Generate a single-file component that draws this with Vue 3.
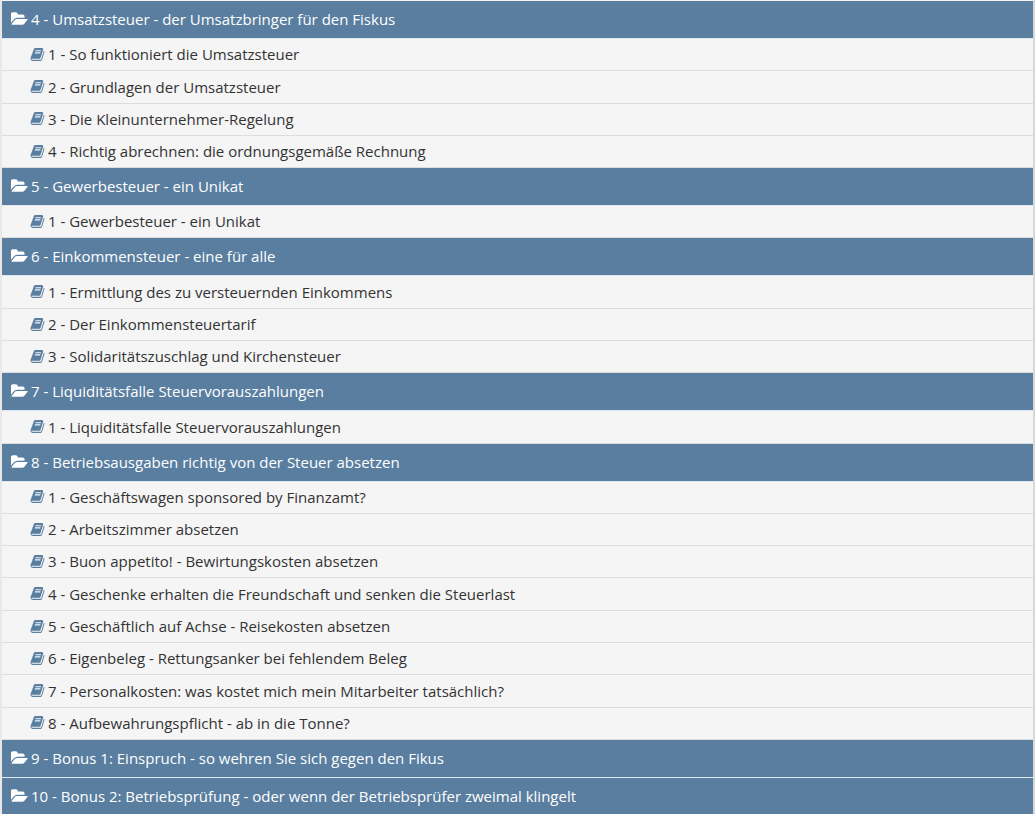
<script setup>
const chapters = [
  { title: "4 - Umsatzsteuer - der Umsatzbringer für den Fiskus", lessons: ["1 - So funktioniert die Umsatzsteuer", "2 - Grundlagen der Umsatzsteuer", "3 - Die Kleinunternehmer-Regelung", "4 - Richtig abrechnen: die ordnungsgemäße Rechnung"] },
  { title: "5 - Gewerbesteuer - ein Unikat", lessons: ["1 - Gewerbesteuer - ein Unikat"] },
  { title: "6 - Einkommensteuer - eine für alle", lessons: ["1 - Ermittlung des zu versteuernden Einkommens", "2 - Der Einkommensteuertarif", "3 - Solidaritätszuschlag und Kirchensteuer"] },
  { title: "7 - Liquiditätsfalle Steuervorauszahlungen", lessons: ["1 - Liquiditätsfalle Steuervorauszahlungen"] },
  { title: "8 - Betriebsausgaben richtig von der Steuer absetzen", lessons: ["1 - Geschäftswagen sponsored by Finanzamt?", "2 - Arbeitszimmer absetzen", "3 - Buon appetito! - Bewirtungskosten absetzen", "4 - Geschenke erhalten die Freundschaft und senken die Steuerlast", "5 - Geschäftlich auf Achse - Reisekosten absetzen", "6 - Eigenbeleg - Rettungsanker bei fehlendem Beleg", "7 - Personalkosten: was kostet mich mein Mitarbeiter tatsächlich?", "8 - Aufbewahrungspflicht - ab in die Tonne?"] },
  { title: "9 - Bonus 1: Einspruch - so wehren Sie sich gegen den Fikus", lessons: [] },
  { title: "10 - Bonus 2: Betriebsprüfung - oder wenn der Betriebsprüfer zweimal klingelt", lessons: [] },
];

const folderPath = "M1815 952q0 31-31 66l-336 396q-43 51-120.5 86.5t-143.5 35.5h-1088q-34 0-60.5-13t-26.5-43q0-31 31-66l336-396q43-51 120.5-86.5t143.5-35.5h1088q34 0 60.5 13t26.5 43zm-343-344v160h-832q-94 0-197 47.5t-164 119.5l-337 396-5 6q0-4-.5-12.5t-.5-12.5v-960q0-92 66-158t158-66h320q92 0 158 66t66 158v32h544q92 0 158 66t66 158z";
const bookPath = "M1703 478q40 57 18 129l-275 906q-19 64-76.5 107.5t-122.5 43.5h-923q-77 0-148.5-53.5t-99.5-131.5q-24-67-2-127 0-4 3-27t4-37q1-8-3-21.5t-3-19.5q2-11 8-21t16.5-23.5 16.5-23.5q23-38 45-91.5t30-91.5q3-10 .5-30t-.5-28q3-11 17-28t17-23q21-36 42-92t25-90q1-9-2.5-32t.5-28q4-13 22-30.5t22-22.5q19-26 42.5-84.5t27.5-96.5q1-8-3-25.5t-2-26.5q2-8 9-18t18-23 17-21q8-12 16.5-30.5t15-35 16-36 19.5-32 26.5-23.5 36-11.5 47.5 5.5l-1 3q38-9 51-9h761q74 0 114 56t18 130l-274 906q-36 119-71.5 153.5t-128.5 34.5h-869q-27 0-38 15-11 16-1 43 24 70 144 70h923q29 0 56-15.5t35-41.5l300-987q7-22 5-57 38 15 59 43zm-1064 2q-4 13 2 22.5t20 9.5h608q13 0 25.5-9.5t16.5-22.5l21-64q4-13-2-22.5t-20-9.5h-608q-13 0-25.5 9.5t-16.5 22.5zm-83 256q-4 13 2 22.5t20 9.5h608q13 0 25.5-9.5t16.5-22.5l21-64q4-13-2-22.5t-20-9.5h-608q-13 0-25.5 9.5t-16.5 22.5z";
</script>

<template>
  <div class="page">
    <div class="chapter" v-for="chapter in chapters" :key="chapter.title">
      <div class="chapter-head">
        <svg class="folder" viewBox="0 0 1920 1792"><path :d="folderPath" /></svg>
        <span>{{ chapter.title }}</span>
      </div>
      <div class="lesson" v-for="lesson in chapter.lessons" :key="lesson">
        <svg class="book" viewBox="0 0 1792 1792"><path :d="bookPath" /></svg>
        <span>{{ lesson }}</span>
      </div>
    </div>
  </div>
</template>

<style>
html,
body {
  margin: 0;
  background: #ffffff;
  overflow: hidden;
}
</style>

<style scoped>
.page {
  height: 814px;
  overflow: hidden;
  padding: 1px 2px 0;
  background: linear-gradient(90deg, #e8e8e8 0, #e8e8e8 2px, #f5f5f5 2px, #f5f5f5 1033px, #d8d8d8 1033px);
  font-family: "Open Sans", sans-serif;
}

.chapter-head {
  display: flex;
  align-items: center;
  height: 36px;
  padding-left: 9px;
  padding-bottom: 1px;
  border-bottom: 1px solid #dfe8f0;
  background: #597ea0;
  color: #ffffff;
  font-size: 15px;
}

.folder {
  width: 18px;
  height: 16px;
  margin-right: 2px;
  fill: #ffffff;
}

.lesson {
  display: flex;
  align-items: center;
  height: 30.7px;
  padding-left: 28px;
  padding-bottom: 0.6px;
  border-bottom: 1px solid #dddddd;
  background: #f5f5f5;
  color: #333333;
  font-size: 15px;
}

.book {
  width: 15px;
  height: 15px;
  margin-right: 3px;
  fill: #597ea0;
}
</style>
